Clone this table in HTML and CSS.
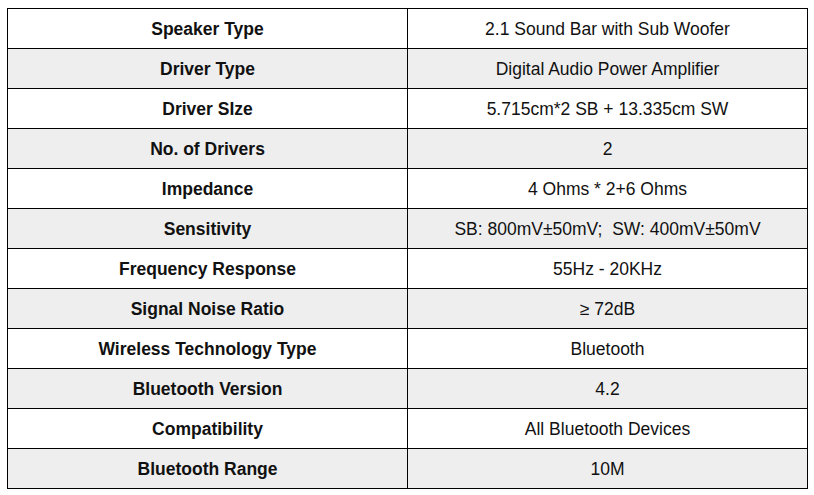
FILE: index.html
```html
<!DOCTYPE html>
<html>
<head>
<meta charset="utf-8">
<link rel="stylesheet" href="styles.css">
</head>
<body>
<table class="specs">
  <tbody>
    <tr><th>Speaker Type</th><td>2.1 Sound Bar with Sub Woofer</td></tr>
    <tr><th>Driver Type</th><td>Digital Audio Power Amplifier</td></tr>
    <tr><th>Driver SIze</th><td>5.715cm*2 SB + 13.335cm SW</td></tr>
    <tr><th>No. of Drivers</th><td>2</td></tr>
    <tr><th>Impedance</th><td>4 Ohms * 2+6 Ohms</td></tr>
    <tr><th>Sensitivity</th><td>SB: 800mV±50mV;&nbsp; SW: 400mV±50mV</td></tr>
    <tr><th>Frequency Response</th><td>55Hz - 20KHz</td></tr>
    <tr><th>Signal Noise Ratio</th><td>≥ 72dB</td></tr>
    <tr><th>Wireless Technology Type</th><td>Bluetooth</td></tr>
    <tr><th>Bluetooth Version</th><td>4.2</td></tr>
    <tr><th>Compatibility</th><td>All Bluetooth Devices</td></tr>
    <tr><th>Bluetooth Range</th><td>10M</td></tr>
  </tbody>
</table>
</body>
</html>
```
FILE: styles.css
```css
html, body {
  margin: 0;
  background: #fff;
}
body {
  padding: 8px 0 0 7px;
  font-family: "Liberation Sans", Arial, sans-serif;
  font-size: 17.5px;
  color: #111;
}
.specs {
  border-collapse: collapse;
  width: 801px;
  table-layout: fixed;
}
.specs th, .specs td {
  border: 1px solid #000;
  height: 40px;
  padding: 2px 8px 0;
  text-align: center;
  vertical-align: middle;
  box-sizing: border-box;
  width: 50%;
}
.specs th {
  font-weight: bold;
}
.specs td {
  font-weight: normal;
}
.specs tr:nth-child(even) th,
.specs tr:nth-child(even) td {
  background: #eee;
}
```
